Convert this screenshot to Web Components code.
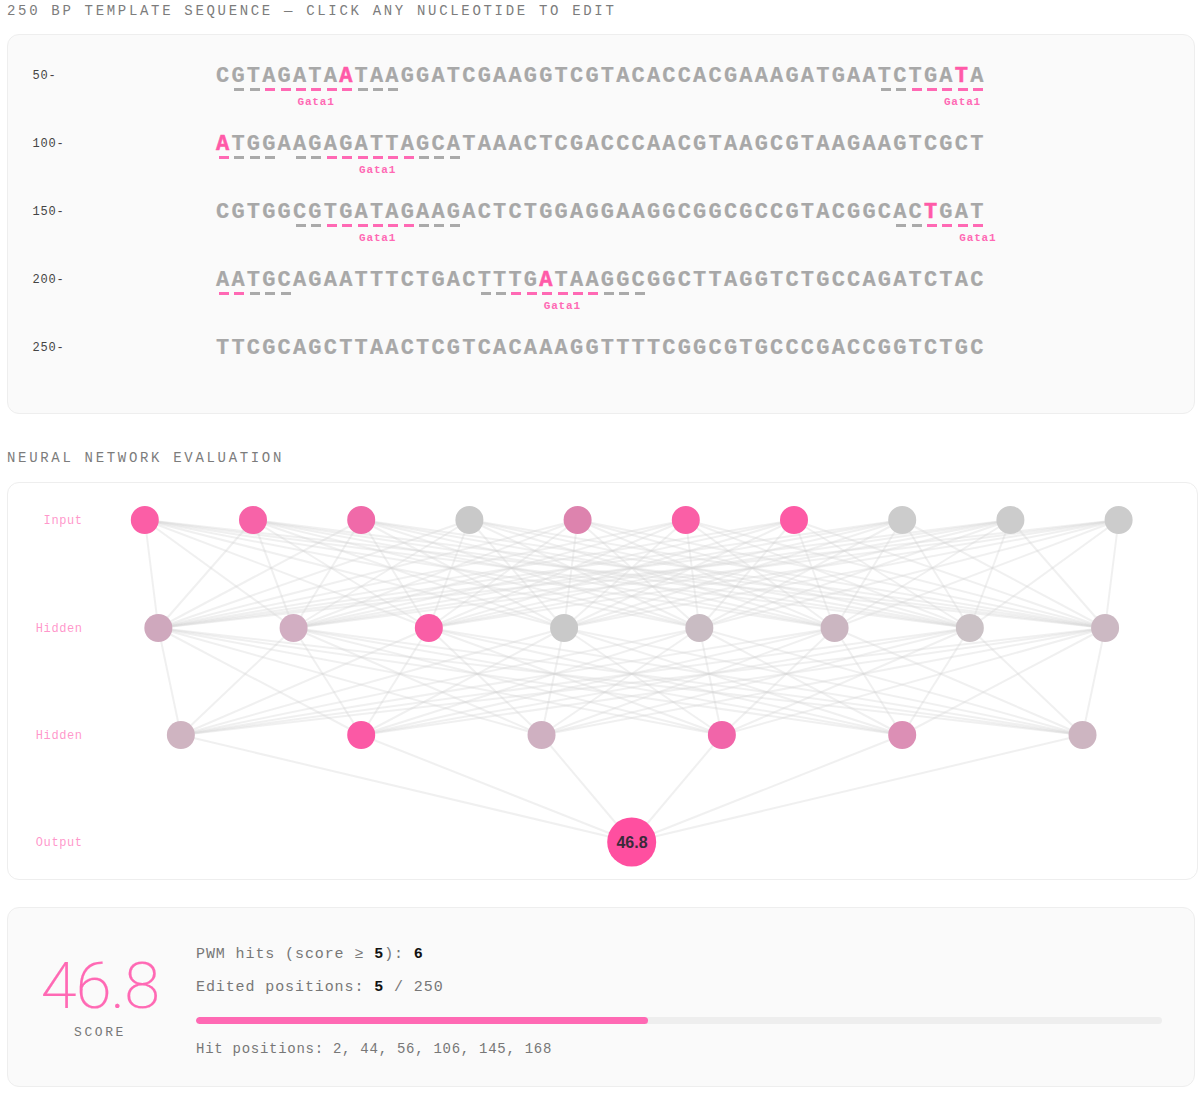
<!DOCTYPE html>
<html lang="en"><head><meta charset="utf-8"><title>Template sequence</title>
<style>
html,body{margin:0;padding:0;background:#fff}
body{font-family:"Liberation Mono",monospace;width:1200px;height:1096px;overflow:hidden}
main{display:flex;flex-direction:column;align-items:flex-start;padding-left:7px}
</style></head><body>
<main>
<section-title>250 BP TEMPLATE SEQUENCE — CLICK ANY NUCLEOTIDE TO EDIT</section-title>
<seq-panel>
<seq-row pos="50-" seq="CGTAGATAATAAGGATCGAAGGTCGTACACCACGAAAGATGAATCTGATA" marks="1g 2g 3p 4p 5p 6p 7p 8p 9g 10g 11g 43g 44g 45p 46p 47p 48p 49p" edits="8 48" labels="6 48"></seq-row>
<seq-row pos="100-" seq="ATGGAAGAGATTAGCATAAACTCGACCCAACGTAAGCGTAAGAAGTCGCT" marks="0p 1g 2g 3g 5g 6g 7p 8p 9p 10p 11p 12p 13g 14g 15g" edits="0" labels="10"></seq-row>
<seq-row pos="150-" seq="CGTGGCGTGATAGAAGACTCTGGAGGAAGGCGGCGCCGTACGGCACTGAT" marks="5g 6g 7p 8p 9p 10p 11p 12p 13g 14g 15g 44g 45g 46p 47p 48p 49p" edits="46" labels="10 49"></seq-row>
<seq-row pos="200-" seq="AATGCAGAATTTCTGACTTTGATAAGGCGGCTTAGGTCTGCCAGATCTAC" marks="0p 1p 2g 3g 4g 17g 18g 19p 20p 21p 22p 23p 24p 25g 26g 27g" edits="21" labels="22"></seq-row>
<seq-row pos="250-" seq="TTCGCAGCTTAACTCGTCACAAAGGTTTTCGGCGTGCCCGACCGGTCTGC" marks="" edits="" labels=""></seq-row>
</seq-panel>
<section-title class="second">NEURAL NETWORK EVALUATION</section-title>
<network-panel></network-panel>
<score-panel score="46.8" hits="6" threshold="5" edited="5" total="250" positions="2, 44, 56, 106, 145, 168"></score-panel>
</main>
<script>
const def=(name,html,init)=>customElements.define(name,class extends HTMLElement{
  constructor(){super();this.attachShadow({mode:'open'}).innerHTML=html}
  connectedCallback(){if(init)init.call(this,this.shadowRoot)}
});
def('section-title',`<style>
:host{display:block;height:20px;font:14px/22px "Liberation Mono",monospace;letter-spacing:2.68px;color:#7c7c7c;white-space:nowrap}
:host(.second){margin-top:33px;margin-bottom:15px}
:host(:not(.second)){margin-bottom:14px}
</style><slot></slot>`);
def('seq-panel',`<style>
:host{display:block;box-sizing:border-box;width:1188px;height:380px;background:#fafafa;border:1px solid #eee;border-radius:12px;padding:25px 24px 0}
</style><slot></slot>`);
def('seq-row',`<style>
:host{display:flex;height:68px}
.pos{box-sizing:border-box;width:184px;padding-left:.6px;flex:none;font:12px/32px "Liberation Mono",monospace;letter-spacing:.8px;color:#444}
.seq{display:flex}
.c{position:relative;display:block;width:15.4px;height:30px;flex:none;font:bold 22px/33px "Liberation Mono",monospace;color:#a8a8a8;-webkit-text-stroke:.2px #a8a8a8}
.c b{display:block;width:13.2px;height:30px;text-align:center;font-weight:inherit}
.c.e{color:#ff5aa8;-webkit-text-stroke:.5px #ff5aa8}
.d{position:absolute;left:3px;top:28px;width:10px;height:2.5px;background:#aaa}
.d.p{background:#ff69b4}
.l{position:absolute;left:-12px;width:39.4px;top:35.5px;text-align:center;font:bold 11px/13px "Liberation Mono",monospace;letter-spacing:.8px;color:#ff69b4;-webkit-text-stroke:0}
</style><div class="pos"></div><div class="seq"></div>`,function(r){
  r.querySelector('.pos').textContent=this.getAttribute('pos');
  const s=this.getAttribute('seq'),m={};
  (this.getAttribute('marks')||'').split(' ').filter(Boolean).forEach(t=>m[parseInt(t)]=t.slice(-1));
  const ed=(this.getAttribute('edits')||'').split(' ').filter(Boolean).map(Number);
  const lb=(this.getAttribute('labels')||'').split(' ').filter(Boolean).map(Number);
  r.querySelector('.seq').innerHTML=[...s].map((ch,i)=>`<span class="c${ed.includes(i)?' e':''}"><b>${ch}</b>${m[i]?`<i class="d ${m[i]}"></i>`:''}${lb.includes(i)?`<span class="l">Gata1</span>`:''}</span>`).join('');
});
def('network-panel',`<style>
:host{display:block;box-sizing:border-box;width:1191px;height:398px;background:#fff;border:1px solid #eee;border-radius:12px}
svg{display:block}
text.t{font:12px "Liberation Mono",monospace;letter-spacing:.6px;fill:#ff69b4;fill-opacity:.7;text-anchor:end;dominant-baseline:central}
text.o{font:bold 16px "Liberation Sans",sans-serif;fill:#3a2a3a;text-anchor:middle;dominant-baseline:central}
line{stroke:#d6d6d6;stroke-width:2;stroke-opacity:.36}
</style><svg width="1189" height="396" viewBox="8 483 1189 396" xmlns="http://www.w3.org/2000/svg"></svg>`,function(r){
  const L=[
   {y:520,t:'Input',c:['#fb5ea6','#f763a8','#f06aa9','#c9c9c9','#dd83ae','#fa5fa6','#fd5aa5','#cccccc','#cccccc','#cccccc']},
   {y:628,t:'Hidden',c:['#cfa8bd','#d2aec2','#f95ea6','#c9c9c9','#c9bcc3','#cbb6c1','#cbc2c6','#ccb9c3']},
   {y:735,t:'Hidden',c:['#cfb4c1','#fb59a5','#cfb0c1','#f165a9','#dc8fb5','#cdb5c1']},
   {y:842,t:'Output',c:['#ff4fa0']}];
  const xs=l=>l.c.map((_,i)=>90.7+1082*(i+.5)/l.c.length);
  let h='';
  for(let k=0;k<3;k++){const a=xs(L[k]),b=xs(L[k+1]);
    a.forEach(x1=>b.forEach(x2=>{h+=`<line x1="${x1}" y1="${L[k].y}" x2="${x2}" y2="${L[k+1].y}"/>`}))}
  L.forEach((l,k)=>{h+=`<text class="t" x="82.6" y="${l.y+1}">${l.t}</text>`;
    const x=xs(l);l.c.forEach((c,i)=>{h+=`<circle cx="${x[i]}" cy="${l.y}" r="${k==3?24.5:14}" fill="${c}"/>`})});
  h+=`<text class="o" x="632" y="842">46.8</text>`;
  r.querySelector('svg').innerHTML=h;
});
def('score-panel',`<style>
:host{display:flex;align-items:center;gap:36px;box-sizing:border-box;width:1188px;height:180px;margin-top:27px;padding:0 32px;background:#fafafa;border:1px solid #eee;border-radius:12px;color:#777;font-family:"Liberation Mono",monospace}
.big{display:flex;flex-direction:column;align-items:center;width:120px;flex:none}
.num{height:72px;font:200 65px/67px Roboto,sans-serif;letter-spacing:-.8px;color:#ff69b4;-webkit-text-stroke:.2px #ff69b4;white-space:nowrap}
.lab{font-size:13px;line-height:18px;letter-spacing:2.6px;margin-top:-1px}
.info{flex:1;min-width:0}
.ln{font-size:15px;line-height:33px;letter-spacing:.9px;white-space:nowrap}
.ln.a{padding-top:3px}
.ln b{color:#111}
.bar{height:6.5px;border-radius:4px;background:#eee;margin-top:13.5px;overflow:hidden}
.bar i{display:block;height:100%;border-radius:4px;background:#ff69b4}
.hit{font-size:14px;line-height:20px;letter-spacing:.73px;margin-top:15.5px;white-space:nowrap}
</style><div class="big"><div class="num"></div><div class="lab">SCORE</div></div>
<div class="info"><div class="ln a"></div><div class="ln e"></div><div class="bar"><i></i></div><div class="hit"></div></div>`,function(r){
  const g=n=>this.getAttribute(n),s=g('score');
  r.querySelector('.num').textContent=s;
  r.querySelector('.a').innerHTML=`PWM hits (score ≥ <b>${g('threshold')}</b>): <b>${g('hits')}</b>`;
  r.querySelector('.e').innerHTML=`Edited positions: <b>${g('edited')}</b> / ${g('total')}`;
  r.querySelector('.bar i').style.width=s+'%';
  r.querySelector('.hit').textContent='Hit positions: '+g('positions');
});
</script>
</body></html>
